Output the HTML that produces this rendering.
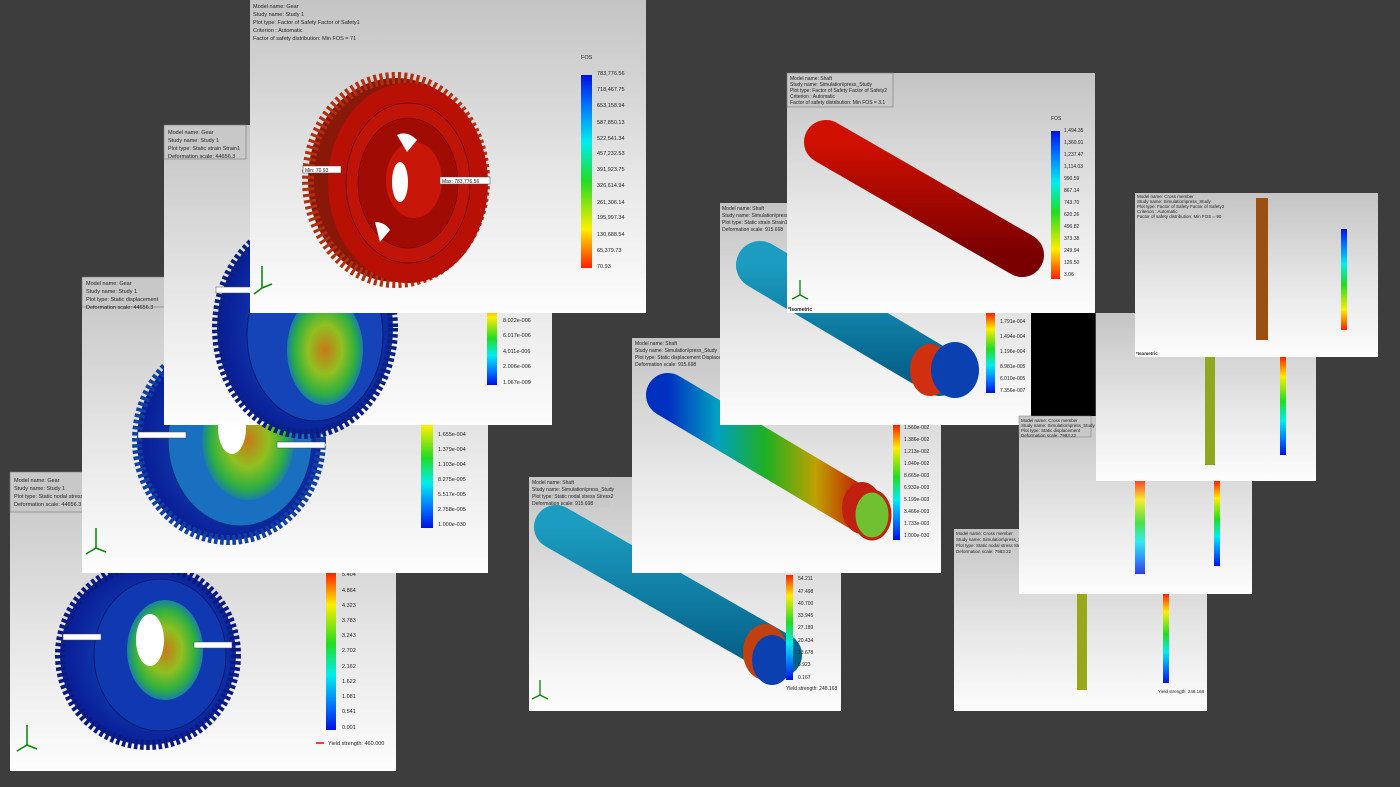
<!DOCTYPE html>
<html><head><meta charset="utf-8"><style>
html,body{margin:0;padding:0;background:#3d3d3d;width:1400px;height:787px;overflow:hidden}
svg{display:block}
text{font-family:"Liberation Sans",sans-serif;fill:#222}
</style></head><body>
<svg width="1400" height="787" viewBox="0 0 1400 787" xmlns="http://www.w3.org/2000/svg">
<defs>
<linearGradient id="bg" x1="0" y1="0" x2="0" y2="1"><stop offset="0" stop-color="#c4c4c4"/><stop offset="0.55" stop-color="#e6e6e6"/><stop offset="1" stop-color="#fdfdfd"/></linearGradient>
<linearGradient id="rbR" x1="0" y1="0" x2="0" y2="1"><stop offset="0" stop-color="#ff2000"/><stop offset="0.2" stop-color="#ffee00"/><stop offset="0.45" stop-color="#22dd22"/><stop offset="0.65" stop-color="#00eeee"/><stop offset="0.85" stop-color="#0070ff"/><stop offset="1" stop-color="#0010e0"/></linearGradient>
<linearGradient id="rbB" x1="0" y1="1" x2="0" y2="0"><stop offset="0" stop-color="#ff2000"/><stop offset="0.2" stop-color="#ffee00"/><stop offset="0.45" stop-color="#22dd22"/><stop offset="0.65" stop-color="#00eeee"/><stop offset="0.85" stop-color="#0070ff"/><stop offset="1" stop-color="#0010e0"/></linearGradient>
<linearGradient id="gR" x1="0" y1="0" x2="1" y2="0"><stop offset="0" stop-color="#0030c0"/><stop offset="0.25" stop-color="#00a0c0"/><stop offset="0.5" stop-color="#20b020"/><stop offset="0.75" stop-color="#c0a000"/><stop offset="1" stop-color="#c01000"/></linearGradient>
<linearGradient id="cyan" x1="0" y1="0" x2="0" y2="1"><stop offset="0" stop-color="#1c9cc0"/><stop offset="1" stop-color="#05628a"/></linearGradient>
<linearGradient id="redS" x1="0" y1="0" x2="0" y2="1"><stop offset="0" stop-color="#d01000"/><stop offset="1" stop-color="#7a0000"/></linearGradient>
<radialGradient id="gIn" cx="0.5" cy="0.5" r="0.5"><stop offset="0" stop-color="#c87818"/><stop offset="0.45" stop-color="#90c020"/><stop offset="0.8" stop-color="#30b040"/><stop offset="1" stop-color="#1a80a0"/></radialGradient>
<radialGradient id="gBlue" cx="0.55" cy="0.5" r="0.5"><stop offset="0" stop-color="#1a60d0"/><stop offset="1" stop-color="#0a2098"/></radialGradient>
</defs>

<!-- Panel A -->
<rect x="10" y="472" width="386" height="299" fill="url(#bg)"/>
<rect x="10" y="472" width="100" height="40" fill="#c8c8c8" stroke="#777" stroke-width="0.6"/>
<text x="14" y="482" font-size="5.5">Model name: Gear</text><text x="14" y="490" font-size="5.5">Study name: Study 1</text><text x="14" y="498" font-size="5.5">Plot type: Static nodal stress</text><text x="14" y="506" font-size="5.5">Deformation scale: 44656.3</text>
<ellipse cx="148" cy="655" rx="88" ry="90" fill="url(#gBlue)" stroke="#0a1a80" stroke-width="10" stroke-dasharray="3.5 2.5"/>
<ellipse cx="160" cy="655" rx="66" ry="76" fill="#1038b0" stroke="#061c70" stroke-width="1"/>
<ellipse cx="165" cy="650" rx="38" ry="50" fill="url(#gIn)"/>
<ellipse cx="150" cy="640" rx="14" ry="26" fill="#fff"/>
<rect x="63" y="634" width="38" height="6" fill="#fff" stroke="#444" stroke-width="0.5"/><rect x="194" y="642" width="38" height="6" fill="#fff" stroke="#444" stroke-width="0.5"/>
<rect x="326" y="573" width="10" height="157" fill="url(#rbR)"/>
<g font-size="5.5"><text x="342" y="576">5.404</text><text x="342" y="592">4.864</text><text x="342" y="607">4.323</text><text x="342" y="622">3.783</text><text x="342" y="637">3.243</text><text x="342" y="652">2.702</text><text x="342" y="668">2.162</text><text x="342" y="683">1.622</text><text x="342" y="698">1.081</text><text x="342" y="713">0.541</text><text x="342" y="729">0.001</text><text x="328" y="745">Yield strength: 460.000</text></g>
<path d="M316 743h8" stroke="#e00" stroke-width="1.5"/>
<path d="M27 745v-20M27 745l-10 6M27 745l10 4" stroke="#080" stroke-width="1.5"/>

<!-- Panel B -->
<rect x="82" y="277" width="406" height="296" fill="url(#bg)"/>
<rect x="82" y="277" width="90" height="30" fill="#c8c8c8" stroke="#777" stroke-width="0.6"/>
<text x="86" y="285" font-size="5.5">Model name: Gear</text><text x="86" y="293" font-size="5.5">Study name: Study 1</text><text x="86" y="301" font-size="5.5">Plot type: Static displacement</text><text x="86" y="309" font-size="5.5">Deformation scale: 44656.3</text>
<ellipse cx="229" cy="440" rx="92" ry="100" fill="url(#gBlue)" stroke="#1040a0" stroke-width="10" stroke-dasharray="3.5 2.5"/>
<ellipse cx="240" cy="440" rx="72" ry="86" fill="#1a70c0" stroke="#0a3080" stroke-width="1"/>
<ellipse cx="248" cy="440" rx="46" ry="60" fill="url(#gIn)"/>
<ellipse cx="232" cy="428" rx="14" ry="26" fill="#fff"/>
<rect x="138" y="432" width="48" height="6" fill="#fff" stroke="#444" stroke-width="0.5"/><rect x="277" y="442" width="48" height="6" fill="#fff" stroke="#444" stroke-width="0.5"/>
<rect x="421" y="400" width="12" height="128" fill="url(#rbR)"/>
<g font-size="5.5"><text x="438" y="436">1.655e-004</text><text x="438" y="451">1.379e-004</text><text x="438" y="466">1.103e-004</text><text x="438" y="481">8.275e-005</text><text x="438" y="496">5.517e-005</text><text x="438" y="511">2.758e-005</text><text x="438" y="526">1.000e-030</text></g>
<path d="M96 548v-20M96 548l-10 6M96 548l10 4" stroke="#080" stroke-width="1.5"/>

<!-- Panel C -->
<rect x="164" y="125" width="388" height="300" fill="url(#bg)"/>
<rect x="164" y="125" width="82" height="34" fill="#c8c8c8" stroke="#777" stroke-width="0.6"/>
<text x="168" y="134" font-size="5.5">Model name: Gear</text><text x="168" y="142" font-size="5.5">Study name: Study 1</text><text x="168" y="150" font-size="5.5">Plot type: Static strain Strain1</text><text x="168" y="158" font-size="5.5">Deformation scale: 44656.3</text>
<ellipse cx="305" cy="328" rx="88" ry="106" fill="url(#gBlue)" stroke="#0a2080" stroke-width="10" stroke-dasharray="3.5 2.5"/>
<ellipse cx="315" cy="335" rx="68" ry="86" fill="#1444b8" stroke="#061c70" stroke-width="1"/>
<ellipse cx="325" cy="350" rx="38" ry="55" fill="url(#gIn)"/>
<rect x="216" y="287" width="48" height="6" fill="#fff" stroke="#444" stroke-width="0.5"/>
<rect x="487" y="300" width="10" height="85" fill="url(#rbR)"/>
<g font-size="5.5"><text x="503" y="322">8.022e-006</text><text x="503" y="337">6.017e-006</text><text x="503" y="353">4.011e-006</text><text x="503" y="368">2.006e-006</text><text x="503" y="384">1.067e-009</text></g>

<!-- Panel D -->
<rect x="250" y="0" width="396" height="313" fill="url(#bg)"/>
<g font-size="5.5"><text x="253" y="8">Model name: Gear</text><text x="253" y="16">Study name: Study 1</text><text x="253" y="24">Plot type: Factor of Safety Factor of Safety1</text><text x="253" y="32">Criterion : Automatic</text><text x="253" y="40">Factor of safety distribution: Min FOS = 71</text></g>
<ellipse cx="396" cy="180" rx="88" ry="102" fill="#8a1808" stroke="#b03010" stroke-width="12" stroke-dasharray="3 3"/>
<ellipse cx="408" cy="183" rx="80" ry="100" fill="#b81004"/>
<ellipse cx="408" cy="183" rx="62" ry="80" fill="#c01408" stroke="#600" stroke-width="0.8"/>
<ellipse cx="408" cy="183" rx="50" ry="65" fill="#a00c04" stroke="#600" stroke-width="0.6"/>
<ellipse cx="414" cy="180" rx="28" ry="38" fill="#c81608"/>
<ellipse cx="400" cy="182" rx="8" ry="20" fill="#fff"/>
<path d="M397 135q10 -5 20 5l-10 12z" fill="#fff"/><path d="M375 222q10 0 15 8l-10 12z" fill="#fff"/>
<rect x="303" y="166" width="38" height="7" fill="#fff" stroke="#444" stroke-width="0.5"/><text x="305" y="172" font-size="5">Min: 70.93</text>
<rect x="440" y="177" width="50" height="7" fill="#fff" stroke="#444" stroke-width="0.5"/><text x="442" y="183" font-size="5">Max: 783,776.56</text>
<text x="581" y="59" font-size="5.5">FOS</text>
<rect x="581" y="75" width="11" height="193" fill="url(#rbB)"/>
<g font-size="5.5"><text x="597" y="75">783,776.56</text><text x="597" y="91">718,467.75</text><text x="597" y="107">653,158.94</text><text x="597" y="124">587,850.13</text><text x="597" y="140">522,541.34</text><text x="597" y="155">457,232.53</text><text x="597" y="171">391,923.75</text><text x="597" y="187">326,614.94</text><text x="597" y="204">261,306.14</text><text x="597" y="219">195,997.34</text><text x="597" y="236">130,688.54</text><text x="597" y="252">65,379.73</text><text x="597" y="268">70.93</text></g>
<path d="M262 288v-22M262 288l-8 6M262 288l10 -4" stroke="#080" stroke-width="1.5"/>

<!-- Panel E -->
<rect x="529" y="477" width="312" height="234" fill="url(#bg)"/>
<rect x="529" y="477" width="80" height="30" fill="#c8c8c8"/>
<g font-size="5"><text x="532" y="484">Model name: Shaft</text><text x="532" y="491">Study name: Simulation\press_Study</text><text x="532" y="498">Plot type: Static nodal stress Stress2</text><text x="532" y="505">Deformation scale: 915.698</text></g>
<path d="M556 527L780 655" stroke="url(#cyan)" stroke-width="44" stroke-linecap="round"/>
<ellipse cx="765" cy="652" rx="22" ry="28" fill="#c04010"/><ellipse cx="772" cy="660" rx="20" ry="25" fill="#0a40b0"/>
<rect x="786" y="575" width="7" height="105" fill="url(#rbR)"/>
<g font-size="5"><text x="798" y="580">54.211</text><text x="798" y="593">47.498</text><text x="798" y="605">40.700</text><text x="798" y="617">33.945</text><text x="798" y="629">27.189</text><text x="798" y="642">20.434</text><text x="798" y="654">13.678</text><text x="798" y="666">6.923</text><text x="798" y="679">0.167</text><text x="786" y="690">Yield strength: 248.168</text></g>
<path d="M540 695v-15M540 695l-8 4M540 695l8 4" stroke="#080" stroke-width="1.3"/>

<!-- Panel F -->
<rect x="632" y="338" width="309" height="235" fill="url(#bg)"/>
<g font-size="5"><text x="635" y="345">Model name: Shaft</text><text x="635" y="352">Study name: Simulation\press_Study</text><text x="635" y="359">Plot type: Static displacement Displacement1</text><text x="635" y="366">Deformation scale: 915.698</text></g>
<path d="M668 395L865 512" stroke="url(#gR)" stroke-width="44" stroke-linecap="round"/>
<ellipse cx="862" cy="508" rx="20" ry="26" fill="#c02010"/><ellipse cx="872" cy="515" rx="18" ry="24" fill="#70c030" stroke="#c02010" stroke-width="3"/>
<rect x="893" y="425" width="7" height="115" fill="url(#rbR)"/>
<g font-size="5"><text x="904" y="429">1.560e-002</text><text x="904" y="441">1.386e-002</text><text x="904" y="453">1.213e-002</text><text x="904" y="465">1.040e-002</text><text x="904" y="477">8.665e-003</text><text x="904" y="489">6.932e-003</text><text x="904" y="501">5.199e-003</text><text x="904" y="513">3.466e-003</text><text x="904" y="525">1.733e-003</text><text x="904" y="537">1.000e-030</text></g>

<!-- Panel G -->
<rect x="720" y="203" width="311" height="222" fill="url(#bg)"/>
<g font-size="5"><text x="722" y="210">Model name: Shaft</text><text x="722" y="217">Study name: Simulation\press_</text><text x="722" y="224">Plot type: Static strain Strain1</text><text x="722" y="231">Deformation scale: 915.698</text></g>
<path d="M760 265L940 372" stroke="url(#cyan)" stroke-width="48" stroke-linecap="round"/>
<ellipse cx="930" cy="370" rx="20" ry="26" fill="#d03010"/><ellipse cx="955" cy="370" rx="24" ry="28" fill="#0a40b0"/>
<rect x="986" y="313" width="9" height="80" fill="url(#rbR)"/>
<g font-size="5"><text x="1000" y="323">1.791e-004</text><text x="1000" y="338">1.494e-004</text><text x="1000" y="353">1.196e-004</text><text x="1000" y="368">8.981e-005</text><text x="1000" y="380">6.010e-005</text><text x="1000" y="392">7.356e-007</text></g>
<rect x="1031" y="313" width="64" height="103" fill="#000"/>

<!-- Panel H -->
<rect x="787" y="73" width="308" height="240" fill="url(#bg)"/>
<rect x="787" y="73" width="106" height="34" fill="#c8c8c8" stroke="#777" stroke-width="0.6"/>
<g font-size="5"><text x="790" y="80">Model name: Shaft</text><text x="790" y="86">Study name: Simulation\press_Study</text><text x="790" y="92">Plot type: Factor of Safety Factor of Safety2</text><text x="790" y="98">Criterion : Automatic</text><text x="790" y="104">Factor of safety distribution: Min FOS = 3.1</text></g>
<path d="M826 142L1022 255" stroke="url(#redS)" stroke-width="44" stroke-linecap="round"/>
<text x="1051" y="120" font-size="5">FOS</text>
<rect x="1051" y="131" width="9" height="148" fill="url(#rbB)"/>
<g font-size="5"><text x="1064" y="132">1,494.35</text><text x="1064" y="144">1,360.91</text><text x="1064" y="156">1,237.47</text><text x="1064" y="168">1,114.03</text><text x="1064" y="180">990.59</text><text x="1064" y="192">867.14</text><text x="1064" y="204">743.70</text><text x="1064" y="216">620.26</text><text x="1064" y="228">496.82</text><text x="1064" y="240">373.38</text><text x="1064" y="252">249.94</text><text x="1064" y="264">126.50</text><text x="1064" y="276">3.06</text></g>
<text x="788" y="311" font-size="5" fill="#226" font-weight="bold">*Isometric</text>
<path d="M800 295v-15M800 295l-8 4M800 295l8 4" stroke="#080" stroke-width="1.3"/>

<!-- Panel L -->
<rect x="954" y="529" width="253" height="182" fill="url(#bg)"/>
<g font-size="4.5"><text x="956" y="535">Model name: Cross member</text><text x="956" y="541">Study name: Simulation\press_Study</text><text x="956" y="547">Plot type: Static nodal stress Stress2</text><text x="956" y="553">Deformation scale: 7983.22</text></g>
<rect x="1077" y="594" width="10" height="96" fill="#98a818"/>
<rect x="1163" y="594" width="6" height="89" fill="url(#rbR)"/>
<text x="1158" y="693" font-size="4.5">Yield strength: 248.168</text>

<!-- Panel K -->
<rect x="1019" y="416" width="233" height="178" fill="url(#bg)"/>
<rect x="1019" y="416" width="72" height="21" fill="#c8c8c8" stroke="#777" stroke-width="0.5"/>
<g font-size="4.5"><text x="1021" y="422">Model name: Cross member</text><text x="1021" y="427">Study name: Simulation\press_Study</text><text x="1021" y="432">Plot type: Static displacement</text><text x="1021" y="437">Deformation scale: 7983.22</text></g>
<rect x="1135" y="481" width="10" height="93" fill="url(#rbR)" opacity="0.8"/>
<rect x="1214" y="481" width="6" height="85" fill="url(#rbR)"/>

<!-- Panel J -->
<rect x="1096" y="313" width="220" height="168" fill="url(#bg)"/>
<rect x="1205" y="357" width="10" height="108" fill="#90a820"/>
<rect x="1280" y="357" width="6" height="98" fill="url(#rbR)"/>

<!-- Panel I -->
<rect x="1135" y="193" width="243" height="164" fill="url(#bg)"/>
<g font-size="4.5"><text x="1137" y="198">Model name: Cross member</text><text x="1137" y="203">Study name: Simulation\press_Study</text><text x="1137" y="208">Plot type: Factor of Safety Factor of Safety2</text><text x="1137" y="213">Criterion : Automatic</text><text x="1137" y="218">Factor of safety distribution: Min FOS = 90</text></g>
<rect x="1256" y="198" width="12" height="142" fill="#9a5010"/>
<rect x="1341" y="229" width="6" height="101" fill="url(#rbB)"/>
<text x="1136" y="355" font-size="4.5" fill="#226" font-weight="bold">*Isometric</text>
</svg>
</body></html>
